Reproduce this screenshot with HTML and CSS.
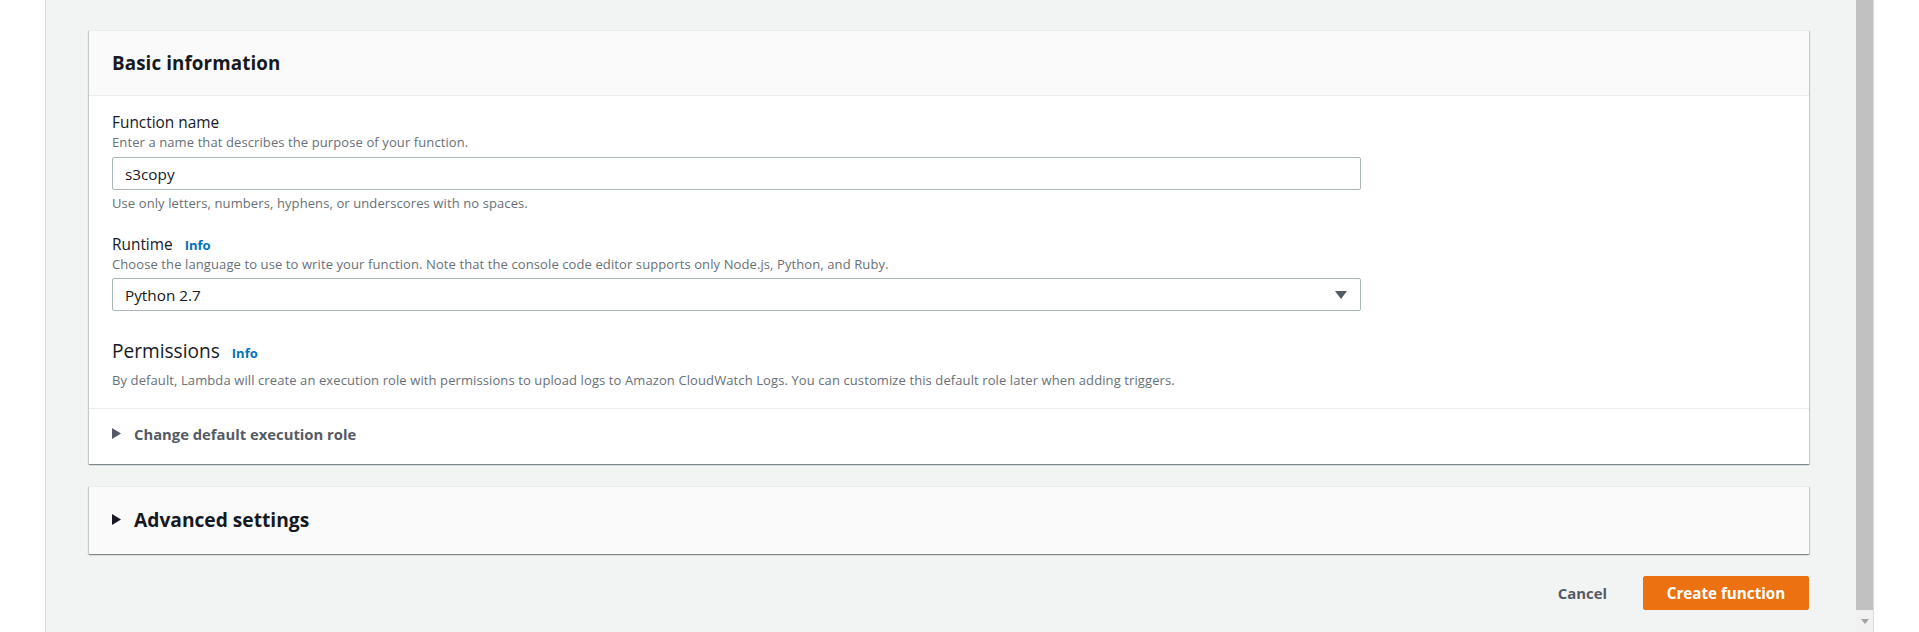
FILE: index.html
```html
<!DOCTYPE html>
<html lang="en">
<head>
<meta charset="utf-8">
<title>Create function</title>
<link rel="stylesheet" href="styles.css">
</head>
<body>
<div class="frame">
  <div class="gutter"></div>
  <main class="content">
    <section class="card">
      <header class="card-header">
        <h2 class="card-title">Basic information</h2>
      </header>
      <div class="card-body">
        <div class="field">
          <div class="label">Function name</div>
          <div class="desc">Enter a name that describes the purpose of your function.</div>
          <div class="input">s3copy</div>
          <div class="hint">Use only letters, numbers, hyphens, or underscores with no spaces.</div>
        </div>
        <div class="field field-runtime">
          <div class="label">Runtime <a class="info">Info</a></div>
          <div class="desc">Choose the language to use to write your function. Note that the console code editor supports only Node.js, Python, and Ruby.</div>
          <div class="input select">
            <span>Python 2.7</span>
            <svg class="caret" width="12" height="8" viewBox="0 0 12 8"><path d="M0 0H12L6 8Z" fill="#545b64"/></svg>
          </div>
        </div>
        <div class="field field-perm">
          <div class="perm-title">Permissions <a class="info">Info</a></div>
          <div class="desc perm-desc">By default, Lambda will create an execution role with permissions to upload logs to Amazon CloudWatch Logs. You can customize this default role later when adding triggers.</div>
        </div>
      </div>
      <div class="expander">
        <svg class="tri" width="9" height="11" viewBox="0 0 9 11"><path d="M0 0L9 5.5L0 11Z" fill="#545b64"/></svg>
        <span>Change default execution role</span>
      </div>
    </section>

    <section class="card card-adv">
      <div class="adv-row">
        <svg class="tri" width="9" height="11" viewBox="0 0 9 11"><path d="M0 0L9 5.5L0 11Z" fill="#16191f"/></svg>
        <span>Advanced settings</span>
      </div>
    </section>

    <div class="actions">
      <button class="btn-link">Cancel</button>
      <button class="btn-primary">Create function</button>
    </div>
  </main>
  <div class="scrollbar">
    <div class="thumb"></div>
    <div class="arrow">
      <svg width="8" height="5" viewBox="0 0 8 5"><path d="M0 0H8L4 5Z" fill="#a3a3a3"/></svg>
    </div>
  </div>
  <div class="outer"></div>
</div>
</body>
</html>
```

FILE: styles.css
```css
* { box-sizing: border-box; }
html, body { margin: 0; padding: 0; height: 100%; }
body {
  background: #ffffff;
  font-family: "Open Sans", Roboto, "Liberation Sans", sans-serif;
  color: #16191f;
  overflow: hidden;
}
.frame {
  display: flex;
  height: 632px;
}
.gutter {
  width: 45px;
  flex: none;
  background: #ffffff;
}
.content {
  width: 1811px;
  flex: none;
  background: #f2f3f3;
  border-left: 1px solid #d5dbdb;
  padding: 30px 47px 0 43px;
}
.card {
  background: #ffffff;
  border-top: 1px solid #eaeded;
  box-shadow: 0 1px 1px 0 rgba(0,28,36,.3), 1px 1px 1px 0 rgba(0,28,36,.15), -1px 1px 1px 0 rgba(0,28,36,.15);
}
.card-header {
  background: #fafafa;
  border-bottom: 1px solid #eaeded;
  height: 65px;
  padding: 0 23px;
  display: flex;
  align-items: center;
}
.card-title {
  margin: 0;
  font-size: 18.8px;
  font-weight: 700;
  line-height: 24px;
  letter-spacing: 0.1px;
}
.card-body {
  padding: 18px 23px 20px;
  border-bottom: 1px solid #eaeded;
}
.label {
  font-size: 15.4px;
  line-height: 18px;
  color: #16191f;
}
.desc {
  font-size: 13px;
  line-height: 16px;
  color: #687078;
  letter-spacing: 0.1px;
}
.field .desc { margin-top: 2px; }
.input {
  margin-top: 7px;
  width: 1249px;
  height: 33px;
  border: 1px solid #aab7b8;
  border-radius: 2px;
  padding: 0 12px;
  font-size: 15.3px;
  display: flex;
  align-items: center;
  color: #16191f;
}
.hint {
  margin-top: 5px;
  font-size: 13px;
  line-height: 16px;
  color: #687078;
  letter-spacing: 0.1px;
}
.field-runtime { margin-top: 25px; }
.select {
  margin-top: 6px;
  justify-content: space-between;
  padding-right: 13px;
}
.info {
  font-size: 13px;
  font-weight: 700;
  color: #0073bb;
  margin-left: 8px;
}
.field-perm { margin-top: 28px; }
.perm-title {
  font-size: 19.1px;
  line-height: 24px;
}
.perm-title .info { margin-left: 7px; }
.field .perm-desc { margin-top: 7px; }
.expander {
  height: 55px;
  padding: 0 23px 6px;
  display: flex;
  align-items: center;
  gap: 13px;
  font-size: 14.8px;
  font-weight: 700;
  color: #545b64;
}
.card-adv {
  margin-top: 22px;
  background: #fafafa;
}
.adv-row {
  height: 67px;
  padding: 0 23px 2px;
  display: flex;
  align-items: center;
  gap: 13px;
  font-size: 19.2px;
  font-weight: 700;
  color: #16191f;
}
.actions {
  margin-top: 22px;
  display: flex;
  justify-content: flex-end;
  align-items: center;
  gap: 24px;
}
.btn-link {
  background: none;
  border: none;
  font-family: inherit;
  font-size: 14.9px;
  font-weight: 700;
  color: #545b64;
  padding: 0 12px;
}
.btn-primary {
  background: #ec7211;
  border: 1px solid #ec7211;
  border-radius: 2px;
  color: #ffffff;
  font-family: inherit;
  font-size: 15.2px;
  font-weight: 700;
  width: 166px;
  height: 34px;
  padding: 0;
}
.scrollbar {
  width: 18px;
  flex: none;
  background: #f1f1f1;
  border-right: 1px solid #dcdcdc;
  display: flex;
  flex-direction: column;
}
.thumb {
  flex: 1;
  background: #c1c1c1;
}
.arrow {
  height: 22px;
  display: flex;
  align-items: center;
  justify-content: center;
}
.outer {
  flex: 1;
  background: #ffffff;
}
```
